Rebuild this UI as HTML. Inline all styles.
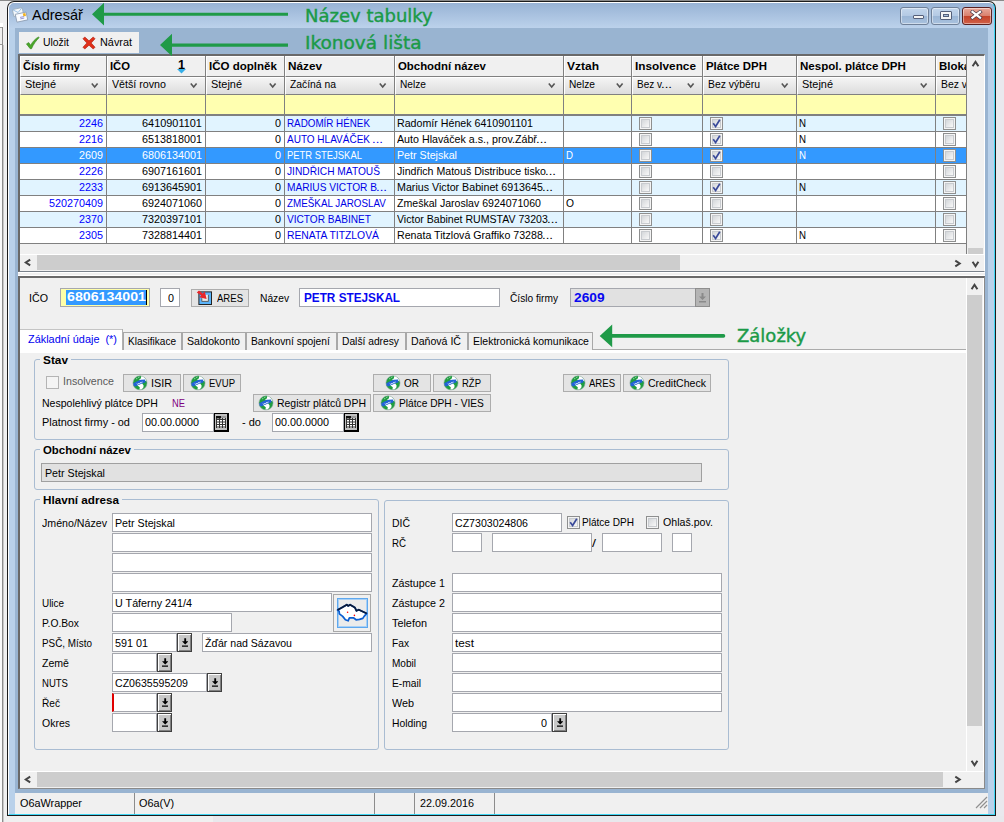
<!DOCTYPE html>
<html lang="cs"><head><meta charset="utf-8"><title>Adresář</title>
<style>
*{box-sizing:border-box;margin:0;padding:0}
html,body{width:1004px;height:822px;overflow:hidden;background:#f0f0f0}
body{position:relative;font-family:"Liberation Sans",sans-serif;font-size:11px;color:#000;line-height:13px}
.a{position:absolute}
.t{position:absolute;white-space:nowrap;transform-origin:0 0}
#win{left:7px;top:1px;width:989px;height:815px;background:#1c1c1c;border-radius:7px 7px 0 0}
#frame{left:1px;top:1px;right:1px;bottom:1px;background:linear-gradient(#98b3d5 0,#bdd3ec 26px,#b9d1ea 27px);border-radius:6px 6px 0 0;border:1px solid #fff;border-right-color:#3fd6f4;border-bottom-color:#3fd6f4}
#client{left:15px;top:28px;width:973px;height:786px;background:#99b4d1}
.ann{font-family:"DejaVu Sans",sans-serif;color:#1a9a47;font-size:18px;line-height:21px;-webkit-text-stroke:.4px #1a9a47}
.hc{position:absolute;top:56px;height:21px;background:#f0f0f0;border-top:1px solid #fff;border-left:1px solid #fff;border-bottom:1px solid #808080}
.fc{position:absolute;top:77px;height:18px;background:linear-gradient(#f4f4f4,#dcdcdc);border-top:1px solid #fff;border-left:1px solid #fff;border-bottom:1px solid #808080}
.vd{position:absolute;width:1px;background:#808080;top:56px;height:188px}
.row{position:absolute;left:20px;width:946px;height:16px;border-bottom:1px solid #808080}
.cb{position:absolute;width:13px;height:13px;border:1px solid #8e8f8f;background:#f4f4f4;box-shadow:inset 0 0 0 1px #f4f4f4,inset 0 0 0 2px #c8cbcf}
.cb i{position:absolute;left:2px;top:2px;right:2px;bottom:2px;background:linear-gradient(135deg,#d4d7da,#f8f8f8)}
.in{position:absolute;height:19px;background:#fff;border:1px solid #a5a7ae}
.btn{position:absolute;height:18px;background:#e4e4e4;border:1px solid #adadad}
.dd{position:absolute;width:15px;height:19px;background:#c8c8c8;border:1px solid #404040;box-shadow:inset 1px 1px 0 #fff,inset -1px -1px 0 #808080}
.gb{position:absolute;border:1px solid #a9bcd2;border-radius:3px}
.gl{position:absolute;background:#f0f0f0;height:13px}
.tab{position:absolute;top:332px;height:18px;background:#f0f0f0;border:1px solid #a8a8a8;border-bottom:none}
</style></head><body>
<div class="a" style="left:996px;top:0;width:8px;height:822px;background:#e9e9ee"></div>
<div class="a" style="left:0;top:0;width:1004px;height:1px;background:#8a8a8a"></div>
<div class="a" style="left:213px;top:816px;width:791px;height:6px;background:#e8e8ec"></div>
<div class="a" style="left:0;top:23px;width:3px;height:4px;background:#fff"></div>
<div class="a" style="left:0;top:27px;width:3px;height:1px;background:#9a9a9a"></div>
<div class="a" style="left:0;top:45px;width:2px;height:777px;background:#fafafa"></div>
<div class="a" style="left:0;top:44px;width:3px;height:1px;background:#9a9a9a"></div>
<div class="a" style="left:2px;top:27px;width:1px;height:795px;background:#8c8c8c"></div>
<div class="a" style="left:3px;top:45px;width:1px;height:777px;background:#c8c8c8"></div>
<div class="a" id="win"><div class="a" id="frame"></div></div>
<div class="a" id="client"></div>
<div class="t" style="left:32px;top:7px;font-size:14.5px;line-height:17px">Adresář</div>
<div class="t ann" style="left:305px;top:5px">Název tabulky</div>
<div class="t ann" style="left:305px;top:32px;font-size:18.5px">Ikonová lišta</div>
<div class="a" style="left:19px;top:32px;width:120px;height:21px;background:#f0f0f0"></div>
<div class="t" style="left:43px;top:36px;transform:scaleX(0.945);">Uložit</div>
<div class="t" style="left:100px;top:36px;transform:scaleX(0.987);">Návrat</div>
<div class="a" style="left:18px;top:54px;width:967px;height:218px;background:#f0f0f0;border:2px solid #696969;border-right:1px solid #fff;border-bottom:1px solid #7a828c"></div>
<div class="a" style="left:20px;top:95px;width:946px;height:149px;background:#fff"></div>
<div class="hc" style="left:20px;width:86px"></div>
<div class="fc" style="left:20px;width:86px"></div>
<div class="hc" style="left:107px;width:98px"></div>
<div class="fc" style="left:107px;width:98px"></div>
<div class="hc" style="left:206px;width:78px"></div>
<div class="fc" style="left:206px;width:78px"></div>
<div class="hc" style="left:285px;width:109px"></div>
<div class="fc" style="left:285px;width:109px"></div>
<div class="hc" style="left:395px;width:168px"></div>
<div class="fc" style="left:395px;width:168px"></div>
<div class="hc" style="left:564px;width:67px"></div>
<div class="fc" style="left:564px;width:67px"></div>
<div class="hc" style="left:632px;width:70px"></div>
<div class="fc" style="left:632px;width:70px"></div>
<div class="hc" style="left:703px;width:93px"></div>
<div class="fc" style="left:703px;width:93px"></div>
<div class="hc" style="left:797px;width:138px"></div>
<div class="fc" style="left:797px;width:138px"></div>
<div class="hc" style="left:936px;width:30px"></div>
<div class="fc" style="left:936px;width:30px"></div>
<div class="t" style="left:23px;top:60px;font-weight:bold;">Číslo firmy</div>
<div class="t" style="left:25px;top:78px;transform:scaleX(0.993);">Stejné</div>

<div class="t" style="left:110px;top:60px;font-weight:bold;transform:scaleX(1.022);">IČO</div>
<div class="t" style="left:112px;top:78px;transform:scaleX(0.970);">Větší rovno</div>

<div class="t" style="left:209px;top:60px;font-weight:bold;transform:scaleX(1.049);">IČO doplněk</div>
<div class="t" style="left:211px;top:78px;transform:scaleX(0.993);">Stejné</div>

<div class="t" style="left:288px;top:60px;font-weight:bold;transform:scaleX(1.069);">Název</div>
<div class="t" style="left:290px;top:78px;transform:scaleX(0.939);">Začíná na</div>

<div class="t" style="left:398px;top:60px;font-weight:bold;transform:scaleX(1.035);">Obchodní název</div>
<div class="t" style="left:400px;top:78px;transform:scaleX(0.924);">Nelze</div>

<div class="t" style="left:567px;top:60px;font-weight:bold;transform:scaleX(1.091);">Vztah</div>
<div class="t" style="left:569px;top:78px;transform:scaleX(0.924);">Nelze</div>

<div class="t" style="left:635px;top:60px;font-weight:bold;transform:scaleX(1.072);">Insolvence</div>
<div class="t" style="left:637px;top:78px;transform:scaleX(0.908);">Bez v</div><div class="t" style="left:661px;top:78px;transform:scaleX(1.197);">...</div>

<div class="t" style="left:706px;top:60px;font-weight:bold;transform:scaleX(1.039);">Plátce DPH</div>
<div class="t" style="left:708px;top:78px;transform:scaleX(0.944);">Bez výběru</div>

<div class="t" style="left:800px;top:60px;font-weight:bold;transform:scaleX(1.050);">Nespol. plátce DPH</div>
<div class="t" style="left:802px;top:78px;transform:scaleX(0.993);">Stejné</div>

<div class="a" style="left:936px;top:56px;width:30px;height:38px;overflow:hidden"><div class="t" style="left:3px;top:4px;font-weight:bold;transform:scaleX(1.042);">Blokace</div><div class="t" style="left:5px;top:22px;transform:scaleX(0.944);">Bez výběru</div></div>
<div class="a" style="left:20px;top:95px;width:946px;height:19px;background:#ffffb0"></div>
<div class="a" style="left:20px;top:114px;width:946px;height:2px;background:#808080"></div>
<div class="row" style="top:116px;background:#e1f4ff"></div>
<div class="t" style="left:79px;top:117px;color:#0000ff;transform:scaleX(0.980);">2246</div>
<div class="t" style="left:142px;top:117px;color:#000;transform:scaleX(0.993);">6410901101</div>
<div class="t" style="left:275px;top:117px;color:#000;transform:scaleX(0.980);">0</div>
<div class="t" style="left:287px;top:117px;color:#0000e6;transform:scaleX(0.893);">RADOMÍR HÉNEK</div>
<div class="t" style="left:397px;top:117px;color:#000;transform:scaleX(0.968);">Radomír Hének 6410901101</div>
<div class="cb" style="left:639px;top:117px"><i></i></div>
<div class="cb" style="left:710px;top:117px"><i></i><svg class="a" style="left:1px;top:1px" width="9" height="9" viewBox="0 0 9 9"><path d="M1.2 4.2 L3.6 7.4 L7.8 0.8" fill="none" stroke="#3a4a9a" stroke-width="1.7"/></svg></div>
<div class="a" style="left:936px;top:116px;width:30px;height:15px;overflow:hidden"><div class="cb" style="left:7px;top:1px"><i></i></div></div>
<div class="t" style="left:799px;top:117px;color:#000;transform:scaleX(0.882);">N</div>
<div class="row" style="top:132px;background:#fff"></div>
<div class="t" style="left:79px;top:133px;color:#0000ff;transform:scaleX(0.980);">2216</div>
<div class="t" style="left:142px;top:133px;color:#000;transform:scaleX(0.980);">6513818001</div>
<div class="t" style="left:275px;top:133px;color:#000;transform:scaleX(0.980);">0</div>
<div class="t" style="left:287px;top:133px;color:#0000e6;transform:scaleX(0.909);">AUTO HLAVÁČEK</div><div class="t" style="left:372px;top:133px;color:#0000e6;transform:scaleX(1.197);">...</div>
<div class="t" style="left:397px;top:133px;color:#000;transform:scaleX(0.971);">Auto Hlaváček a.s., prov.Zábř</div><div class="t" style="left:536px;top:133px;color:#000;transform:scaleX(1.197);">...</div>
<div class="cb" style="left:639px;top:133px"><i></i></div>
<div class="cb" style="left:710px;top:133px"><i></i><svg class="a" style="left:1px;top:1px" width="9" height="9" viewBox="0 0 9 9"><path d="M1.2 4.2 L3.6 7.4 L7.8 0.8" fill="none" stroke="#3a4a9a" stroke-width="1.7"/></svg></div>
<div class="a" style="left:936px;top:132px;width:30px;height:15px;overflow:hidden"><div class="cb" style="left:7px;top:1px"><i></i></div></div>
<div class="t" style="left:799px;top:133px;color:#000;transform:scaleX(0.882);">N</div>
<div class="row" style="top:148px;background:#3399ff"></div>
<div class="t" style="left:79px;top:149px;color:#fff;transform:scaleX(0.980);">2609</div>
<div class="t" style="left:142px;top:149px;color:#fff;transform:scaleX(0.980);">6806134001</div>
<div class="t" style="left:275px;top:149px;color:#fff;transform:scaleX(0.980);">0</div>
<div class="t" style="left:287px;top:149px;color:#fff;transform:scaleX(0.857);">PETR STEJSKAL</div>
<div class="t" style="left:397px;top:149px;color:#fff;transform:scaleX(0.971);">Petr Stejskal</div>
<div class="t" style="left:566px;top:149px;color:#fff;transform:scaleX(0.882);">D</div>
<div class="cb" style="left:639px;top:149px"><i></i></div>
<div class="cb" style="left:710px;top:149px"><i></i><svg class="a" style="left:1px;top:1px" width="9" height="9" viewBox="0 0 9 9"><path d="M1.2 4.2 L3.6 7.4 L7.8 0.8" fill="none" stroke="#3a4a9a" stroke-width="1.7"/></svg></div>
<div class="a" style="left:936px;top:148px;width:30px;height:15px;overflow:hidden"><div class="cb" style="left:7px;top:1px"><i></i></div></div>
<div class="t" style="left:799px;top:149px;color:#fff;transform:scaleX(0.882);">N</div>
<div class="row" style="top:164px;background:#fff"></div>
<div class="t" style="left:79px;top:165px;color:#0000ff;transform:scaleX(0.980);">2226</div>
<div class="t" style="left:142px;top:165px;color:#000;transform:scaleX(0.980);">6907161601</div>
<div class="t" style="left:275px;top:165px;color:#000;transform:scaleX(0.980);">0</div>
<div class="t" style="left:287px;top:165px;color:#0000e6;transform:scaleX(0.926);">JINDŘICH MATOUŠ</div>
<div class="t" style="left:397px;top:165px;color:#000;transform:scaleX(0.963);">Jindřich Matouš Distribuce tisko</div><div class="t" style="left:545px;top:165px;color:#000;transform:scaleX(1.197);">...</div>
<div class="cb" style="left:639px;top:165px"><i></i></div>
<div class="cb" style="left:710px;top:165px"><i></i></div>
<div class="a" style="left:936px;top:164px;width:30px;height:15px;overflow:hidden"><div class="cb" style="left:7px;top:1px"><i></i></div></div>
<div class="row" style="top:180px;background:#e1f4ff"></div>
<div class="t" style="left:79px;top:181px;color:#0000ff;transform:scaleX(0.980);">2233</div>
<div class="t" style="left:142px;top:181px;color:#000;transform:scaleX(0.980);">6913645901</div>
<div class="t" style="left:275px;top:181px;color:#000;transform:scaleX(0.980);">0</div>
<div class="t" style="left:287px;top:181px;color:#0000e6;transform:scaleX(0.922);">MARIUS VICTOR B</div><div class="t" style="left:376px;top:181px;color:#0000e6;transform:scaleX(1.197);">...</div>
<div class="t" style="left:397px;top:181px;color:#000;transform:scaleX(0.971);">Marius Victor Babinet 6913645</div><div class="t" style="left:542px;top:181px;color:#000;transform:scaleX(1.197);">...</div>
<div class="cb" style="left:639px;top:181px"><i></i></div>
<div class="cb" style="left:710px;top:181px"><i></i><svg class="a" style="left:1px;top:1px" width="9" height="9" viewBox="0 0 9 9"><path d="M1.2 4.2 L3.6 7.4 L7.8 0.8" fill="none" stroke="#3a4a9a" stroke-width="1.7"/></svg></div>
<div class="a" style="left:936px;top:180px;width:30px;height:15px;overflow:hidden"><div class="cb" style="left:7px;top:1px"><i></i></div></div>
<div class="t" style="left:799px;top:181px;color:#000;transform:scaleX(0.882);">N</div>
<div class="row" style="top:196px;background:#fff"></div>
<div class="t" style="left:49px;top:197px;color:#0000ff;transform:scaleX(0.980);">520270409</div>
<div class="t" style="left:142px;top:197px;color:#000;transform:scaleX(0.980);">6924071060</div>
<div class="t" style="left:275px;top:197px;color:#000;transform:scaleX(0.980);">0</div>
<div class="t" style="left:287px;top:197px;color:#0000e6;transform:scaleX(0.894);">ZMEŠKAL JAROSLAV</div>
<div class="t" style="left:397px;top:197px;color:#000;transform:scaleX(0.961);">Zmeškal Jaroslav 6924071060</div>
<div class="t" style="left:566px;top:197px;color:#000;transform:scaleX(0.934);">O</div>
<div class="cb" style="left:639px;top:197px"><i></i></div>
<div class="cb" style="left:710px;top:197px"><i></i></div>
<div class="a" style="left:936px;top:196px;width:30px;height:15px;overflow:hidden"><div class="cb" style="left:7px;top:1px"><i></i></div></div>
<div class="row" style="top:212px;background:#e1f4ff"></div>
<div class="t" style="left:79px;top:213px;color:#0000ff;transform:scaleX(0.980);">2370</div>
<div class="t" style="left:142px;top:213px;color:#000;transform:scaleX(0.980);">7320397101</div>
<div class="t" style="left:275px;top:213px;color:#000;transform:scaleX(0.980);">0</div>
<div class="t" style="left:287px;top:213px;color:#0000e6;transform:scaleX(0.918);">VICTOR BABINET</div>
<div class="t" style="left:397px;top:213px;color:#000;transform:scaleX(0.960);">Victor Babinet RUMSTAV 73203</div><div class="t" style="left:547px;top:213px;color:#000;transform:scaleX(1.197);">...</div>
<div class="cb" style="left:639px;top:213px"><i></i></div>
<div class="cb" style="left:710px;top:213px"><i></i></div>
<div class="a" style="left:936px;top:212px;width:30px;height:15px;overflow:hidden"><div class="cb" style="left:7px;top:1px"><i></i></div></div>
<div class="row" style="top:228px;background:#fff"></div>
<div class="t" style="left:79px;top:229px;color:#0000ff;transform:scaleX(0.980);">2305</div>
<div class="t" style="left:142px;top:229px;color:#000;transform:scaleX(0.980);">7328814401</div>
<div class="t" style="left:275px;top:229px;color:#000;transform:scaleX(0.980);">0</div>
<div class="t" style="left:287px;top:229px;color:#0000e6;transform:scaleX(0.940);">RENATA TITZLOVÁ</div>
<div class="t" style="left:397px;top:229px;color:#000;transform:scaleX(0.967);">Renata Titzlová Graffiko 73288</div><div class="t" style="left:542px;top:229px;color:#000;transform:scaleX(1.197);">...</div>
<div class="cb" style="left:639px;top:229px"><i></i></div>
<div class="cb" style="left:710px;top:229px"><i></i><svg class="a" style="left:1px;top:1px" width="9" height="9" viewBox="0 0 9 9"><path d="M1.2 4.2 L3.6 7.4 L7.8 0.8" fill="none" stroke="#3a4a9a" stroke-width="1.7"/></svg></div>
<div class="a" style="left:936px;top:228px;width:30px;height:15px;overflow:hidden"><div class="cb" style="left:7px;top:1px"><i></i></div></div>
<div class="t" style="left:799px;top:229px;color:#000;transform:scaleX(0.882);">N</div>
<div class="vd" style="left:106px"></div>
<div class="vd" style="left:205px"></div>
<div class="vd" style="left:284px"></div>
<div class="vd" style="left:394px"></div>
<div class="vd" style="left:563px"></div>
<div class="vd" style="left:631px"></div>
<div class="vd" style="left:702px"></div>
<div class="vd" style="left:796px"></div>
<div class="vd" style="left:935px"></div>
<div class="vd" style="left:966px;height:199px"></div>
<div class="a" style="left:967px;top:56px;width:17px;height:199px;background:#f0f0f0"></div>


<div class="a" style="left:968px;top:248px;width:15px;height:7px;background:#cdcdcd"></div>
<div class="a" style="left:20px;top:254px;width:964px;height:1px;background:#fff"></div>
<div class="a" style="left:37px;top:255px;width:643px;height:15px;background:#cdcdcd"></div>


<div class="a" style="left:18px;top:272px;width:967px;height:4px;background:#f0f0f0;border-top:1px solid #fff;border-bottom:1px solid #fff"></div>
<div class="a" style="left:18px;top:276px;width:967px;height:513px;background:#f0f0f0;border:2px solid #696969;border-right:1px solid #8a8a8a;border-bottom:1px solid #8a8a8a;box-shadow:inset -1px -1px 0 #fff"></div>
<div class="t" style="left:29px;top:292px;transform:scaleX(0.971);">IČO</div>
<div class="in" style="left:60px;top:288px;width:90px;height:19px;background:#ffffa8"><div class="a" style="left:5px;top:1px;width:80px;height:15px;background:#3399ff"></div><div class="t" style="left:6px;top:0px;font-size:13px;line-height:15px;font-weight:bold;color:#fff;transform:scaleX(1.092);">6806134001</div></div>
<div class="a" style="left:146px;top:290px;width:1px;height:15px;background:#000"></div>
<div class="in" style="left:160px;top:288px;width:20px;height:19px"><div class="t" style="left:7px;top:3px;transform:scaleX(0.980);">0</div></div>
<div class="btn" style="left:191px;top:289px;width:58px;height:18px"><svg class="a" style="left:4px;top:0" width="18" height="16" viewBox="0 0 18 16"><rect x="2.9" y="1.9" width="12.6" height="12.6" fill="#5ab4fa" stroke="#222" stroke-width="1"/><rect x="5.8" y="4.8" width="6.6" height="6.6" fill="#e9e9e9"/><path d="M5.8 8.2 V11.4 H12.4 V4.8" fill="none" stroke="#555" stroke-width=".9"/><path d="M0.8 2.6 L3 0.4 L6.8 3.4 L8.8 1.6 L10.6 9 L3.2 7.2 L5.2 5.4 Z" fill="#e8262a"/></svg><div class="t" style="left:25px;top:2px;transform:scaleX(0.868);">ARES</div></div>
<div class="t" style="left:260px;top:292px;transform:scaleX(0.930);">Název</div>
<div class="in" style="left:299px;top:288px;width:201px;height:19px"><div class="t" style="left:4px;top:2px;font-size:12px;line-height:14px;font-weight:bold;color:#0808f0;transform:scaleX(0.980);">PETR STEJSKAL</div></div>
<div class="t" style="left:510px;top:292px;transform:scaleX(0.924);">Číslo firmy</div>
<div class="in" style="left:570px;top:288px;width:126px;height:19px;background:#e1e1e1"><div class="t" style="left:3px;top:2px;font-size:12px;line-height:14px;font-weight:bold;color:#0808f0;transform:scaleX(1.143);">2609</div></div>
<div class="a" style="left:695px;top:288px;width:15px;height:19px;background:#b4b4b4;border:1px solid #8e8e8e"><svg class="a" style="left:3px;top:4px" width="7" height="10" viewBox="0 0 7 10"><path d="M2.5 0 H4.5 V3.5 H7 L3.5 7 L0 3.5 H2.5 Z M0 8 H7 V9.5 H0 Z" fill="#8a8a8a"/></svg></div>
<div class="a" style="left:20px;top:349px;width:947px;height:1px;background:#ababab"></div>
<div class="a" style="left:20px;top:350px;width:947px;height:3px;background:#fff"></div>
<div class="a" style="left:20px;top:329px;width:103px;height:23px;background:#fff;border-top:1px solid #c4c4c4"></div><div class="a" style="left:122px;top:329px;width:1px;height:21px;background:#b0b0b0"></div><div class="t" style="left:28px;top:333px;color:#0000f0;transform:scaleX(0.990);">Základní údaje&nbsp; (*)</div>
<div class="tab" style="left:123px;width:59px"><div class="t" style="left:4px;top:2px;transform:scaleX(0.913);">Klasifikace</div></div>
<div class="tab" style="left:182px;width:64px"><div class="t" style="left:4px;top:2px;transform:scaleX(0.962);">Saldokonto</div></div>
<div class="tab" style="left:246px;width:91px"><div class="t" style="left:4px;top:2px;transform:scaleX(0.935);">Bankovní spojení</div></div>
<div class="tab" style="left:337px;width:69px"><div class="t" style="left:4px;top:2px;transform:scaleX(0.932);">Další adresy</div></div>
<div class="tab" style="left:406px;width:62px"><div class="t" style="left:4px;top:2px;transform:scaleX(0.962);">Daňová IČ</div></div>
<div class="tab" style="left:468px;width:125px"><div class="t" style="left:4px;top:2px;transform:scaleX(0.953);">Elektronická komunikace</div></div>
<svg class="a" style="left:0;top:0" width="1004" height="360" viewBox="0 0 1004 360" fill="#1f9a48"><path d="M92 14.2 L104 2.8 V12.7 H288 V15.8 H104 V25.4 Z"/><path d="M160 45 L172 33.8 V43.4 H288 V46.7 H172 V56.3 Z"/><path d="M599.7 335.9 L612.2 324.6 V334.1 H723.5 A1.8 1.8 0 0 1 723.5 337.7 H612.2 V347.2 Z"/></svg>
<div class="t ann" style="left:737px;top:325px">Záložky</div>
<div class="gb" style="left:34px;top:359px;width:695px;height:81px"></div><div class="gl" style="left:40px;top:353px;width:31px"></div><div class="t" style="left:43px;top:354px;font-weight:bold;transform:scaleX(1.075);">Stav</div>
<div class="gb" style="left:34px;top:449px;width:695px;height:41px"></div><div class="gl" style="left:40px;top:443px;width:94px"></div><div class="t" style="left:43px;top:444px;font-weight:bold;transform:scaleX(1.035);">Obchodní název</div>
<div class="gb" style="left:34px;top:499px;width:345px;height:251px"></div><div class="gl" style="left:40px;top:493px;width:82px"></div><div class="t" style="left:43px;top:494px;font-weight:bold;transform:scaleX(1.062);">Hlavní adresa</div>
<div class="gb" style="left:384px;top:500px;width:345px;height:250px"></div>
<div class="a" style="left:46px;top:376px;width:13px;height:13px;border:1px solid #b4b4b4;background:#f4f4f4"></div>
<div class="t" style="left:63px;top:375px;color:#5a5a5a;transform:scaleX(0.969);">Insolvence</div>
<div class="btn" style="left:123px;top:374px;width:58px;height:18px"><svg class="a" style="left:8px;top:0px" width="16" height="16" viewBox="0 0 16 16"><circle cx="8" cy="7.9" r="7.1" fill="#1f9e40"/><path d="M9.3 1 L11.5 1.6 L14 4.5 L14.6 6.2 L10.5 5.2 L8.2 6 L7.2 4.6 L8.8 3.4 Z" fill="#fff"/><path d="M5.2 10.2 L8.2 9 L10.2 8.6 L11.6 10.4 L11.4 12.6 L9.6 14.6 L7.4 14.8 L7.8 12.2 Z" fill="#fff"/><path d="M0.9 8.6 L4.6 6.4 L8.6 4.8 L13 4.6 L13.6 7.2 L10.2 8.4 L6.4 10 L3.4 11.6 L1.6 10.8 Z" fill="#2263d6"/><path d="M5 8.6 L5.8 9.6 L6.6 8 L7.6 9 L8.6 7.2 L9.6 8.2 L10.2 6.6" fill="none" stroke="#e8f0ff" stroke-width=".8"/><path d="M4 3.6 L5.4 3 L5 4.4 Z M6 2.2 L7.6 1.6 L7 3 Z" fill="#bfe6c8"/><circle cx="8" cy="7.9" r="7.1" fill="none" stroke="#9aa" stroke-width=".5"/></svg><div class="t" style="left:27px;top:2px;transform:scaleX(0.981);">ISIR</div></div>
<div class="btn" style="left:183px;top:374px;width:58px;height:18px"><svg class="a" style="left:6px;top:0px" width="16" height="16" viewBox="0 0 16 16"><circle cx="8" cy="7.9" r="7.1" fill="#1f9e40"/><path d="M9.3 1 L11.5 1.6 L14 4.5 L14.6 6.2 L10.5 5.2 L8.2 6 L7.2 4.6 L8.8 3.4 Z" fill="#fff"/><path d="M5.2 10.2 L8.2 9 L10.2 8.6 L11.6 10.4 L11.4 12.6 L9.6 14.6 L7.4 14.8 L7.8 12.2 Z" fill="#fff"/><path d="M0.9 8.6 L4.6 6.4 L8.6 4.8 L13 4.6 L13.6 7.2 L10.2 8.4 L6.4 10 L3.4 11.6 L1.6 10.8 Z" fill="#2263d6"/><path d="M5 8.6 L5.8 9.6 L6.6 8 L7.6 9 L8.6 7.2 L9.6 8.2 L10.2 6.6" fill="none" stroke="#e8f0ff" stroke-width=".8"/><path d="M4 3.6 L5.4 3 L5 4.4 Z M6 2.2 L7.6 1.6 L7 3 Z" fill="#bfe6c8"/><circle cx="8" cy="7.9" r="7.1" fill="none" stroke="#9aa" stroke-width=".5"/></svg><div class="t" style="left:25px;top:2px;transform:scaleX(0.868);">EVUP</div></div>
<div class="btn" style="left:373px;top:374px;width:58px;height:18px"><svg class="a" style="left:11px;top:0px" width="16" height="16" viewBox="0 0 16 16"><circle cx="8" cy="7.9" r="7.1" fill="#1f9e40"/><path d="M9.3 1 L11.5 1.6 L14 4.5 L14.6 6.2 L10.5 5.2 L8.2 6 L7.2 4.6 L8.8 3.4 Z" fill="#fff"/><path d="M5.2 10.2 L8.2 9 L10.2 8.6 L11.6 10.4 L11.4 12.6 L9.6 14.6 L7.4 14.8 L7.8 12.2 Z" fill="#fff"/><path d="M0.9 8.6 L4.6 6.4 L8.6 4.8 L13 4.6 L13.6 7.2 L10.2 8.4 L6.4 10 L3.4 11.6 L1.6 10.8 Z" fill="#2263d6"/><path d="M5 8.6 L5.8 9.6 L6.6 8 L7.6 9 L8.6 7.2 L9.6 8.2 L10.2 6.6" fill="none" stroke="#e8f0ff" stroke-width=".8"/><path d="M4 3.6 L5.4 3 L5 4.4 Z M6 2.2 L7.6 1.6 L7 3 Z" fill="#bfe6c8"/><circle cx="8" cy="7.9" r="7.1" fill="none" stroke="#9aa" stroke-width=".5"/></svg><div class="t" style="left:30px;top:2px;transform:scaleX(0.909);">OR</div></div>
<div class="btn" style="left:433px;top:374px;width:58px;height:18px"><svg class="a" style="left:9px;top:0px" width="16" height="16" viewBox="0 0 16 16"><circle cx="8" cy="7.9" r="7.1" fill="#1f9e40"/><path d="M9.3 1 L11.5 1.6 L14 4.5 L14.6 6.2 L10.5 5.2 L8.2 6 L7.2 4.6 L8.8 3.4 Z" fill="#fff"/><path d="M5.2 10.2 L8.2 9 L10.2 8.6 L11.6 10.4 L11.4 12.6 L9.6 14.6 L7.4 14.8 L7.8 12.2 Z" fill="#fff"/><path d="M0.9 8.6 L4.6 6.4 L8.6 4.8 L13 4.6 L13.6 7.2 L10.2 8.4 L6.4 10 L3.4 11.6 L1.6 10.8 Z" fill="#2263d6"/><path d="M5 8.6 L5.8 9.6 L6.6 8 L7.6 9 L8.6 7.2 L9.6 8.2 L10.2 6.6" fill="none" stroke="#e8f0ff" stroke-width=".8"/><path d="M4 3.6 L5.4 3 L5 4.4 Z M6 2.2 L7.6 1.6 L7 3 Z" fill="#bfe6c8"/><circle cx="8" cy="7.9" r="7.1" fill="none" stroke="#9aa" stroke-width=".5"/></svg><div class="t" style="left:28px;top:2px;transform:scaleX(0.864);">RŽP</div></div>
<div class="btn" style="left:563px;top:374px;width:58px;height:18px"><svg class="a" style="left:6px;top:0px" width="16" height="16" viewBox="0 0 16 16"><circle cx="8" cy="7.9" r="7.1" fill="#1f9e40"/><path d="M9.3 1 L11.5 1.6 L14 4.5 L14.6 6.2 L10.5 5.2 L8.2 6 L7.2 4.6 L8.8 3.4 Z" fill="#fff"/><path d="M5.2 10.2 L8.2 9 L10.2 8.6 L11.6 10.4 L11.4 12.6 L9.6 14.6 L7.4 14.8 L7.8 12.2 Z" fill="#fff"/><path d="M0.9 8.6 L4.6 6.4 L8.6 4.8 L13 4.6 L13.6 7.2 L10.2 8.4 L6.4 10 L3.4 11.6 L1.6 10.8 Z" fill="#2263d6"/><path d="M5 8.6 L5.8 9.6 L6.6 8 L7.6 9 L8.6 7.2 L9.6 8.2 L10.2 6.6" fill="none" stroke="#e8f0ff" stroke-width=".8"/><path d="M4 3.6 L5.4 3 L5 4.4 Z M6 2.2 L7.6 1.6 L7 3 Z" fill="#bfe6c8"/><circle cx="8" cy="7.9" r="7.1" fill="none" stroke="#9aa" stroke-width=".5"/></svg><div class="t" style="left:25px;top:2px;transform:scaleX(0.868);">ARES</div></div>
<div class="btn" style="left:623px;top:374px;width:88px;height:18px"><svg class="a" style="left:5px;top:0px" width="16" height="16" viewBox="0 0 16 16"><circle cx="8" cy="7.9" r="7.1" fill="#1f9e40"/><path d="M9.3 1 L11.5 1.6 L14 4.5 L14.6 6.2 L10.5 5.2 L8.2 6 L7.2 4.6 L8.8 3.4 Z" fill="#fff"/><path d="M5.2 10.2 L8.2 9 L10.2 8.6 L11.6 10.4 L11.4 12.6 L9.6 14.6 L7.4 14.8 L7.8 12.2 Z" fill="#fff"/><path d="M0.9 8.6 L4.6 6.4 L8.6 4.8 L13 4.6 L13.6 7.2 L10.2 8.4 L6.4 10 L3.4 11.6 L1.6 10.8 Z" fill="#2263d6"/><path d="M5 8.6 L5.8 9.6 L6.6 8 L7.6 9 L8.6 7.2 L9.6 8.2 L10.2 6.6" fill="none" stroke="#e8f0ff" stroke-width=".8"/><path d="M4 3.6 L5.4 3 L5 4.4 Z M6 2.2 L7.6 1.6 L7 3 Z" fill="#bfe6c8"/><circle cx="8" cy="7.9" r="7.1" fill="none" stroke="#9aa" stroke-width=".5"/></svg><div class="t" style="left:24px;top:2px;transform:scaleX(0.958);">CreditCheck</div></div>
<div class="t" style="left:42px;top:397px;transform:scaleX(0.958);">Nespolehlivý plátce DPH</div>
<div class="t" style="left:172px;top:397px;color:#800080;transform:scaleX(0.851);">NE</div>
<div class="btn" style="left:253px;top:394px;width:118px;height:18px"><svg class="a" style="left:4px;top:0px" width="16" height="16" viewBox="0 0 16 16"><circle cx="8" cy="7.9" r="7.1" fill="#1f9e40"/><path d="M9.3 1 L11.5 1.6 L14 4.5 L14.6 6.2 L10.5 5.2 L8.2 6 L7.2 4.6 L8.8 3.4 Z" fill="#fff"/><path d="M5.2 10.2 L8.2 9 L10.2 8.6 L11.6 10.4 L11.4 12.6 L9.6 14.6 L7.4 14.8 L7.8 12.2 Z" fill="#fff"/><path d="M0.9 8.6 L4.6 6.4 L8.6 4.8 L13 4.6 L13.6 7.2 L10.2 8.4 L6.4 10 L3.4 11.6 L1.6 10.8 Z" fill="#2263d6"/><path d="M5 8.6 L5.8 9.6 L6.6 8 L7.6 9 L8.6 7.2 L9.6 8.2 L10.2 6.6" fill="none" stroke="#e8f0ff" stroke-width=".8"/><path d="M4 3.6 L5.4 3 L5 4.4 Z M6 2.2 L7.6 1.6 L7 3 Z" fill="#bfe6c8"/><circle cx="8" cy="7.9" r="7.1" fill="none" stroke="#9aa" stroke-width=".5"/></svg><div class="t" style="left:23px;top:2px;transform:scaleX(0.951);">Registr plátců DPH</div></div>
<div class="btn" style="left:373px;top:394px;width:118px;height:18px"><svg class="a" style="left:6px;top:0px" width="16" height="16" viewBox="0 0 16 16"><circle cx="8" cy="7.9" r="7.1" fill="#1f9e40"/><path d="M9.3 1 L11.5 1.6 L14 4.5 L14.6 6.2 L10.5 5.2 L8.2 6 L7.2 4.6 L8.8 3.4 Z" fill="#fff"/><path d="M5.2 10.2 L8.2 9 L10.2 8.6 L11.6 10.4 L11.4 12.6 L9.6 14.6 L7.4 14.8 L7.8 12.2 Z" fill="#fff"/><path d="M0.9 8.6 L4.6 6.4 L8.6 4.8 L13 4.6 L13.6 7.2 L10.2 8.4 L6.4 10 L3.4 11.6 L1.6 10.8 Z" fill="#2263d6"/><path d="M5 8.6 L5.8 9.6 L6.6 8 L7.6 9 L8.6 7.2 L9.6 8.2 L10.2 6.6" fill="none" stroke="#e8f0ff" stroke-width=".8"/><path d="M4 3.6 L5.4 3 L5 4.4 Z M6 2.2 L7.6 1.6 L7 3 Z" fill="#bfe6c8"/><circle cx="8" cy="7.9" r="7.1" fill="none" stroke="#9aa" stroke-width=".5"/></svg><div class="t" style="left:25px;top:2px;transform:scaleX(0.926);">Plátce DPH - VIES</div></div>
<div class="t" style="left:42px;top:416px;transform:scaleX(0.992);">Platnost firmy - od</div>
<div class="in" style="left:142px;top:413px;width:72px;"><div class="t" style="left:2px;top:2px;transform:scaleX(0.980);">00.00.0000</div></div>
<div class="a" style="left:214px;top:413px;width:15px;height:19px;background:#c0c0c0;border:1px solid #000;border-right-width:2px;border-bottom-width:2px"><svg class="a" style="left:1px;top:2px" width="10" height="12" viewBox="0 0 10 12"><rect x="0" y="0" width="10" height="12" fill="#fff"/><rect x="0" y="0" width="5" height="2.5" fill="#111"/><rect x="5" y="0" width="5" height="2.5" fill="#999"/><path d="M0 3.5 H10 M0 6 H10 M0 8.5 H10 M0 11 H10 M0.5 2 V12 M3.5 2 V12 M6.5 2 V12 M9.5 2 V12" stroke="#333" stroke-width="1" fill="none"/></svg></div>
<div class="t" style="left:242px;top:416px;">- do</div>
<div class="in" style="left:272px;top:413px;width:72px;"><div class="t" style="left:2px;top:2px;transform:scaleX(0.980);">00.00.0000</div></div>
<div class="a" style="left:344px;top:413px;width:15px;height:19px;background:#c0c0c0;border:1px solid #000;border-right-width:2px;border-bottom-width:2px"><svg class="a" style="left:1px;top:2px" width="10" height="12" viewBox="0 0 10 12"><rect x="0" y="0" width="10" height="12" fill="#fff"/><rect x="0" y="0" width="5" height="2.5" fill="#111"/><rect x="5" y="0" width="5" height="2.5" fill="#999"/><path d="M0 3.5 H10 M0 6 H10 M0 8.5 H10 M0 11 H10 M0.5 2 V12 M3.5 2 V12 M6.5 2 V12 M9.5 2 V12" stroke="#333" stroke-width="1" fill="none"/></svg></div>
<div class="in" style="left:41px;top:463px;width:661px;background:#e1e1e1;border-color:#a0a0a0"><div class="t" style="left:3px;top:3px;transform:scaleX(0.971);">Petr Stejskal</div></div>
<div class="t" style="left:42px;top:517px;transform:scaleX(0.966);">Jméno/Název</div>
<div class="t" style="left:42px;top:597px;transform:scaleX(0.900);">Ulice</div>
<div class="t" style="left:42px;top:617px;transform:scaleX(0.935);">P.O.Box</div>
<div class="t" style="left:42px;top:637px;transform:scaleX(0.898);">PSČ, Místo</div>
<div class="t" style="left:42px;top:657px;transform:scaleX(0.960);">Země</div>
<div class="t" style="left:42px;top:677px;transform:scaleX(0.868);">NUTS</div>
<div class="t" style="left:42px;top:697px;transform:scaleX(0.920);">Řeč</div>
<div class="t" style="left:42px;top:717px;transform:scaleX(0.954);">Okres</div>
<div class="in" style="left:112px;top:513px;width:260px;"><div class="t" style="left:2px;top:3px;transform:scaleX(0.971);">Petr Stejskal</div></div>
<div class="in" style="left:112px;top:533px;width:260px;"></div>
<div class="in" style="left:112px;top:553px;width:260px;"></div>
<div class="in" style="left:112px;top:573px;width:260px;"></div>
<div class="in" style="left:112px;top:593px;width:220px;"><div class="t" style="left:2px;top:3px;transform:scaleX(0.978);">U Táferny 241/4</div></div>
<div class="in" style="left:112px;top:613px;width:120px;"></div>
<div class="in" style="left:112px;top:633px;width:65px;"><div class="t" style="left:2px;top:3px;transform:scaleX(0.980);">591 01</div></div>
<div class="dd" style="left:177px;top:633px"><svg class="a" style="left:3.5px;top:4px" width="6.4" height="9.4" viewBox="0 0 7 10"><path d="M2.5 0 H4.5 V3.5 H7 L3.5 7 L0 3.5 H2.5 Z M0 8 H7 V9.5 H0 Z" fill="#000"/></svg></div>
<div class="in" style="left:202px;top:633px;width:170px;"><div class="t" style="left:2px;top:3px;transform:scaleX(0.960);">Žďár nad Sázavou</div></div>
<div class="in" style="left:112px;top:653px;width:45px;"></div>
<div class="dd" style="left:157px;top:653px"><svg class="a" style="left:3.5px;top:4px" width="6.4" height="9.4" viewBox="0 0 7 10"><path d="M2.5 0 H4.5 V3.5 H7 L3.5 7 L0 3.5 H2.5 Z M0 8 H7 V9.5 H0 Z" fill="#000"/></svg></div>
<div class="in" style="left:112px;top:673px;width:95px;"><div class="t" style="left:2px;top:3px;transform:scaleX(0.962);">CZ0635595209</div></div>
<div class="dd" style="left:207px;top:673px"><svg class="a" style="left:3.5px;top:4px" width="6.4" height="9.4" viewBox="0 0 7 10"><path d="M2.5 0 H4.5 V3.5 H7 L3.5 7 L0 3.5 H2.5 Z M0 8 H7 V9.5 H0 Z" fill="#000"/></svg></div>
<div class="in" style="left:112px;top:693px;width:45px;border-left:2px solid #e00000"></div>
<div class="dd" style="left:157px;top:693px"><svg class="a" style="left:3.5px;top:4px" width="6.4" height="9.4" viewBox="0 0 7 10"><path d="M2.5 0 H4.5 V3.5 H7 L3.5 7 L0 3.5 H2.5 Z M0 8 H7 V9.5 H0 Z" fill="#000"/></svg></div>
<div class="in" style="left:112px;top:713px;width:45px;"></div>
<div class="dd" style="left:157px;top:713px"><svg class="a" style="left:3.5px;top:4px" width="6.4" height="9.4" viewBox="0 0 7 10"><path d="M2.5 0 H4.5 V3.5 H7 L3.5 7 L0 3.5 H2.5 Z M0 8 H7 V9.5 H0 Z" fill="#000"/></svg></div>
<div class="a" style="left:333px;top:594px;width:38px;height:38px;background:#f0f0f0;border:1px solid #a8a8a8"></div><div class="a" style="left:337px;top:598px;width:31px;height:30px;border:1px solid #5fa8ee;box-shadow:inset 0 0 0 1px #a8d0f6;background:#ebebeb"></div><svg class="a" style="left:333px;top:594px" width="38" height="38" viewBox="0 0 38 38"><path d="M4.5 16.1 L9.1 13.4 L13.8 10.7 L15.1 11.9 L17.1 10.7 L21.8 13.4 L23.5 16.8 L25.8 15.7 L28.5 17.0 L33.8 19.4 L31.1 22.4 L29.8 24.4 L26.5 25.4 L23.1 25.8 L20.4 23.8 L16.4 23.8 L15.1 26.8 L12.4 25.8 L9.7 22.4 L6.4 19.8 L6.1 17.2 Z" fill="#fff" stroke="#0a5cd0" stroke-width="1.7" stroke-linejoin="round"/><path d="M4.5 16.1 L9.1 13.4 L13.8 10.7 L15.1 11.9 L17.1 10.7 L21.8 13.4 L23.5 16.8 L25.8 15.7 L28.5 17.0 L33.8 19.4" fill="none" stroke="#0a1a3a" stroke-width="1.7" stroke-linejoin="round"/><circle cx="14.6" cy="18.3" r=".8" fill="#f00"/><circle cx="21.4" cy="21.4" r=".8" fill="#f00"/></svg>
<div class="t" style="left:392px;top:517px;transform:scaleX(0.950);">DIČ</div>
<div class="t" style="left:392px;top:537px;transform:scaleX(0.882);">RČ</div>
<div class="t" style="left:392px;top:577px;transform:scaleX(0.973);">Zástupce 1</div>
<div class="t" style="left:392px;top:597px;transform:scaleX(0.973);">Zástupce 2</div>
<div class="t" style="left:392px;top:617px;transform:scaleX(0.986);">Telefon</div>
<div class="t" style="left:392px;top:637px;transform:scaleX(0.927);">Fax</div>
<div class="t" style="left:392px;top:657px;transform:scaleX(0.913);">Mobil</div>
<div class="t" style="left:392px;top:677px;transform:scaleX(0.931);">E-mail</div>
<div class="t" style="left:392px;top:697px;transform:scaleX(0.981);">Web</div>
<div class="t" style="left:392px;top:717px;transform:scaleX(0.938);">Holding</div>
<div class="in" style="left:452px;top:513px;width:110px;"><div class="t" style="left:2px;top:3px;transform:scaleX(0.962);">CZ7303024806</div></div>
<div class="cb" style="left:567px;top:516px"><i></i><svg class="a" style="left:1px;top:1px" width="9" height="9" viewBox="0 0 9 9"><path d="M1.2 4.2 L3.6 7.4 L7.8 0.8" fill="none" stroke="#3a4a9a" stroke-width="1.7"/></svg></div>
<div class="t" style="left:582px;top:516px;transform:scaleX(0.914);">Plátce DPH</div>
<div class="cb" style="left:646px;top:516px"><i></i></div>
<div class="t" style="left:663px;top:516px;transform:scaleX(0.965);">Ohlaš.pov.</div>
<div class="in" style="left:452px;top:533px;width:30px;"></div>
<div class="in" style="left:492px;top:533px;width:100px;"></div>
<div class="t" style="left:592px;top:537px;transform:scaleX(1.306);">/</div>
<div class="in" style="left:602px;top:533px;width:60px;"></div>
<div class="in" style="left:672px;top:533px;width:20px;"></div>
<div class="in" style="left:452px;top:573px;width:270px;"></div>
<div class="in" style="left:452px;top:593px;width:270px;"></div>
<div class="in" style="left:452px;top:613px;width:270px;"></div>
<div class="in" style="left:452px;top:633px;width:270px;"><div class="t" style="left:2px;top:3px;transform:scaleX(1.070);">test</div></div>
<div class="in" style="left:452px;top:653px;width:270px;"></div>
<div class="in" style="left:452px;top:673px;width:270px;"></div>
<div class="in" style="left:452px;top:693px;width:270px;"></div>
<div class="in" style="left:452px;top:713px;width:100px;"><div class="t" style="left:88px;top:3px;transform:scaleX(0.980);">0</div></div>
<div class="dd" style="left:552px;top:713px"><svg class="a" style="left:3.5px;top:4px" width="6.4" height="9.4" viewBox="0 0 7 10"><path d="M2.5 0 H4.5 V3.5 H7 L3.5 7 L0 3.5 H2.5 Z M0 8 H7 V9.5 H0 Z" fill="#000"/></svg></div>
<div class="a" style="left:966px;top:278px;width:17px;height:493px;background:#f0f0f0;border-left:1px solid #fff"></div>
<div class="a" style="left:967px;top:295px;width:15px;height:431px;background:#cdcdcd"></div>


<div class="a" style="left:20px;top:771px;width:964px;height:17px;background:#f0f0f0;border-top:1px solid #fff"></div>
<div class="a" style="left:37px;top:772px;width:906px;height:15px;background:#cdcdcd"></div>


<div class="a" style="left:15px;top:793px;width:973px;height:21px;background:#f0f0f0"></div>
<div class="a" style="left:134px;top:793px;width:1px;height:21px;background:#8c8c8c"></div>
<div class="a" style="left:374px;top:793px;width:1px;height:21px;background:#8c8c8c"></div>
<div class="a" style="left:414px;top:793px;width:1px;height:21px;background:#8c8c8c"></div>
<div class="a" style="left:494px;top:793px;width:1px;height:21px;background:#8c8c8c"></div>
<div class="t" style="left:20px;top:797px;transform:scaleX(0.987);">O6aWrapper</div>
<div class="t" style="left:139px;top:797px;transform:scaleX(0.987);">O6a(V)</div>
<div class="t" style="left:420px;top:797px;transform:scaleX(0.980);">22.09.2016</div>
<svg class="a" style="left:975px;top:796px" width="13" height="13" viewBox="0 0 13 13"><path d="M1 12 L12 1 M5 12 L12 5 M9 12 L12 9" stroke="#909090" stroke-width="1.2" fill="none"/></svg>
<svg class="a" style="left:12px;top:6px" width="18" height="18" viewBox="0 0 18 18"><g transform="rotate(-12 6 6)"><rect x="1" y="2.5" width="10" height="7" fill="#f4f8fc" stroke="#9ab" stroke-width=".8"/><path d="M1 2.5 L6 6.5 L11 2.5" fill="none" stroke="#8fb8e0" stroke-width=".8"/></g><g transform="rotate(-12 10 11)"><rect x="4" y="7" width="11" height="8" fill="#fafcff" stroke="#8a9ab0" stroke-width=".8"/><rect x="11.5" y="7.8" width="2.6" height="3" fill="#f0b020"/><path d="M8 11 H12 M8 12.5 H12" stroke="#8888cc" stroke-width=".8"/></g></svg>
<svg class="a" style="left:25px;top:36px" width="15" height="14" viewBox="0 0 16 16" preserveAspectRatio="none"><path d="M1.5 9 L4 7.5 L6 10.5 C8 6.5 11 3 14.5 1 L15 2 C12 5 9 9.5 7 14.5 L5.5 14.5 Z" fill="#4aa82a" stroke="#2f7d18" stroke-width=".6"/></svg>
<svg class="a" style="left:82px;top:36px" width="14" height="14" viewBox="0 0 15 15"><path d="M1 3 L3 1 L7.5 5.2 L12 1 L14 3 L9.8 7.5 L14 12 L12 14 L7.5 9.8 L3 14 L1 12 L5.2 7.5 Z" fill="#e0301a" stroke="#a81808" stroke-width=".6"/></svg>
<div class="a" style="left:900px;top:7px;width:29px;height:18px;border:1px solid #6f8098;border-radius:3px;background:linear-gradient(#c3d6ec 0,#b4cae4 48%,#9bb6d6 52%,#a9c2de 100%);box-shadow:inset 0 0 0 1px rgba(255,255,255,.45)"></div>
<div class="a" style="left:931px;top:7px;width:29px;height:18px;border:1px solid #6f8098;border-radius:3px;background:linear-gradient(#c3d6ec 0,#b4cae4 48%,#9bb6d6 52%,#a9c2de 100%);box-shadow:inset 0 0 0 1px rgba(255,255,255,.45)"></div>
<div class="a" style="left:962px;top:7px;width:30px;height:18px;border:1px solid #5a2020;border-radius:3px;background:linear-gradient(#e9a99b 0,#d9816f 48%,#c4432a 52%,#d06048 100%);box-shadow:inset 0 0 0 1px rgba(255,255,255,.45)"></div>
<div class="a" style="left:913px;top:15px;width:11px;height:4px;background:#f4f4f4;border:1px solid #55607a;border-radius:1px"></div>
<div class="a" style="left:940px;top:11px;width:12px;height:9px;background:#f4f4f4;border:1px solid #55607a;border-radius:1px"><div class="a" style="left:2px;top:2px;width:6px;height:3px;background:#a8bfdc;border:1px solid #55607a"></div></div>
<svg class="a" style="left:970px;top:10px" width="12.5" height="9.5" viewBox="0 0 13 10"><path d="M2.5 2 L10.5 8 M10.5 2 L2.5 8" stroke="#4a3a4a" stroke-width="3.8" stroke-linecap="square"/><path d="M2.5 2 L10.5 8 M10.5 2 L2.5 8" stroke="#fff" stroke-width="2.3" stroke-linecap="square"/></svg>
<div class="t" style="left:178px;top:57px;font-size:13px;line-height:15px;font-weight:bold;transform:scaleX(0.968);">1</div>
<svg class="a" style="left:177px;top:69px" width="9" height="4.6" viewBox="0 0 10 5"><path d="M0 0 H10 L5 5 Z" fill="#35aee8"/></svg>
<svg class="a" style="left:0;top:0" width="1004" height="822" viewBox="0 0 1004 822" fill="none"><path d="M91.8 83.6 L94.7 87 L97.6 83.6" stroke="#555" stroke-width="1.6"/><path d="M190.8 83.6 L193.7 87 L196.6 83.6" stroke="#555" stroke-width="1.6"/><path d="M269.8 83.6 L272.7 87 L275.6 83.6" stroke="#555" stroke-width="1.6"/><path d="M379.8 83.6 L382.7 87 L385.6 83.6" stroke="#555" stroke-width="1.6"/><path d="M548.8 83.6 L551.7 87 L554.6 83.6" stroke="#555" stroke-width="1.6"/><path d="M616.8 83.6 L619.7 87 L622.6 83.6" stroke="#555" stroke-width="1.6"/><path d="M687.8 83.6 L690.7 87 L693.6 83.6" stroke="#555" stroke-width="1.6"/><path d="M781.8 83.6 L784.7 87 L787.6 83.6" stroke="#555" stroke-width="1.6"/><path d="M920.8 83.6 L923.7 87 L926.6 83.6" stroke="#555" stroke-width="1.6"/><path d="M972.6 66.2 L975.5 61.8 L978.4 66.2" stroke="#454545" stroke-width="2.0"/><path d="M972.6 261.8 L975.5 266.2 L978.4 261.8" stroke="#454545" stroke-width="2.0"/><path d="M30.2 259.6 L25.8 262.5 L30.2 265.4" stroke="#454545" stroke-width="2.0"/><path d="M955.3 260.6 L959.7 263.5 L955.3 266.4" stroke="#454545" stroke-width="2.0"/><path d="M971.6 289.2 L974.5 284.8 L977.4 289.2" stroke="#454545" stroke-width="2.0"/><path d="M971.6 760.8 L974.5 765.2 L977.4 760.8" stroke="#454545" stroke-width="2.0"/><path d="M30.2 776.6 L25.8 779.5 L30.2 782.4" stroke="#454545" stroke-width="2.0"/><path d="M955.3 776.6 L959.7 779.5 L955.3 782.4" stroke="#454545" stroke-width="2.0"/></svg>
</body></html>
